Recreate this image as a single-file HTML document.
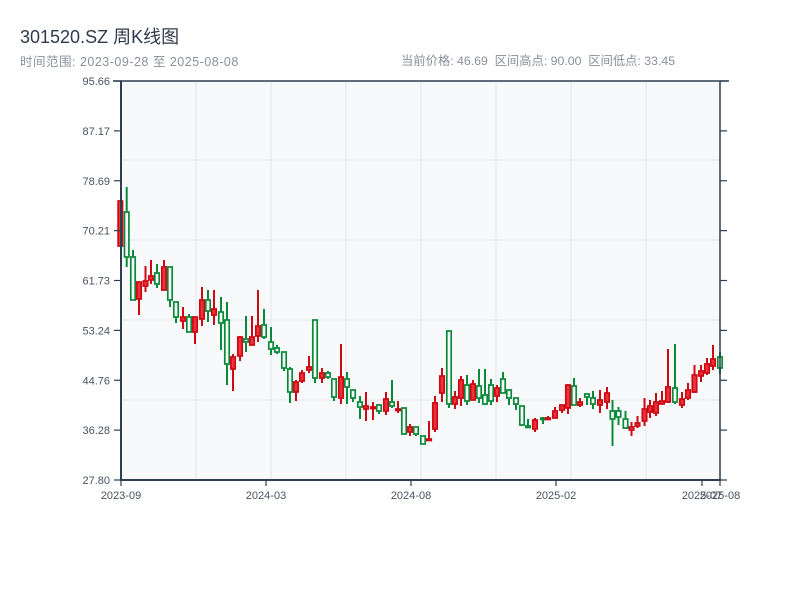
<!DOCTYPE html>
<html><head><meta charset="utf-8"><style>
body{margin:0;width:800px;height:600px;background:#fff;font-family:"Liberation Sans","Noto Sans CJK SC",sans-serif;position:relative;overflow:hidden}
.t{position:absolute;left:20px;top:23px;font-size:18px;color:#2f3a4a}
.s{position:absolute;top:51px;font-size:12.5px;color:#8a9099}
</style></head><body>
<div class="t">301520.SZ 周K线图</div>
<div class="s" style="left:20px;letter-spacing:0.5px">时间范围: 2023-09-28 至 2025-08-08</div>
<div class="s" style="left:401px;font-size:12.3px">当前价格: 46.69&nbsp; 区间高点: 90.00&nbsp; 区间低点: 33.45</div>
<svg id="c" width="800" height="600" style="position:absolute;left:0;top:0" font-family="Liberation Sans, sans-serif"></svg>
<script>
var s='';
s+='<rect x="121" y="81" width="599" height="399" fill="#f7f9fb"/>';
[160,240,320,400].forEach(function(y){s+='<line x1="121" x2="720" y1="'+y+'" y2="'+y+'" stroke="#e3e5e9" stroke-width="1"/>';});
for(var k=1;k<8;k++){var x=121+k*75;s+='<line x1="'+x+'" x2="'+x+'" y1="81" y2="480" stroke="#e3e5e9" stroke-width="1"/>';}
var d=[
[120.3,'r',201,246,201,246],[126.7,'g',212,257,187,267],[133,'g',257,300,250,300],[139,'r',282,299,282,315],[145.5,'r',281,286,266,292],[151,'r',276,280,260,284],[157,'g',273,284,264,288],[164,'r',267,290,260,290],[170,'g',267,300,267,307],[176,'g',302,317,302,323],
[183,'r',317,321,307,329],[189,'g',317,332,314,332],[195,'r',317,332,317,344],[202,'r',300,319,287,326],[208,'g',300,311,290,322],[214,'r',309,315,290,325],[221,'g',312,323,297,350],[227,'g',320,364,302,385],[233,'r',357,369,354,391],[240,'r',337,356,336,361],[246,'g',339,342,316,352],[252,'r',337,345,316,345],[258,'r',326,336,290,342],[264,'g',325,337,309,339],[271,'g',342,349,327,355],[277,'g',348,352,345,354],[284,'g',352,368,352,371],[290,'g',369,392,367,403],[296,'r',382,392,380,401],[302,'r',373,381,370,383],[309,'r',367,370,356,373],[315,'g',320,378,320,383],[322,'r',373,378,368,383],[328,'g',373,377,371,379],[334,'g',379,397,379,401],[341,'r',377,398,344,404],[347,'g',379,387,372,404],[353,'g',390,398,390,402],[360,'g',402,407,396,419],[366,'r',406,409,392,421],[373,'r',407,408,402,420],[379,'g',405,411,404,414],
[386,'r',399,411,392,415],[392,'g',402,406,380,408],[398,'r',409,410,401,413],[404,'g',408,434,408,435],[410,'r',427,432,424,436],[416,'g',427,434,427,436],[423,'g',436,444,436,444],[429,'r',439,440,421,441],[435,'r',403,429,396,432],[442,'r',376,393,368,402],[449,'g',331,404,331,408],[455,'r',397,404,391,409],[461,'r',380,398,376,406],[467,'g',385,401,375,405],[473,'r',384,400,380,400],[479,'g',386,398,369,403],[485,'g',395,404,369,405],[491,'g',385,401,379,405],[497,'r',388,396,385,402],[503,'g',379,393,372,393],[509,'g',390,398,390,405],[516,'g',398,404,398,410],[522,'g',406,425,406,426],[528,'g',426,427,419,428],[535,'r',420,429,418,432],[543,'g',418,419,417,424],[548,'r',418,419,416,420],[555,'r',411,418,407,418],[562,'r',405,410,405,413],[568,'r',385,408,384,414],[574,'g',386,405,378,405],
[580,'r',402,405,398,407],[587,'g',394,397,394,405],[593,'g',398,404,391,409],[600,'r',400,405,390,413],[607,'r',393,402,387,409],[612.5,'g',411,419,400,446],[618.5,'g',411,417,407,425],[625.5,'g',419,428,411,429],[631.5,'r',427,430,422,436],[637.5,'r',423,426,416,428],[644.5,'r',409,421,398,426],[650,'r',406,412,400,418],[656,'r',402,413,393,416],[662,'r',401,404,391,404],[668,'r',387,402,349,403],[675,'g',388,402,344,404],[682,'r',399,405,392,408],[688,'r',390,398,383,400],[694.5,'r',375,392,365,393],[701,'r',371,376,365,382],[707,'r',364,373,358,375],[713,'r',359,366,345,370],[720,'g',357,368,352,374]];
d.forEach(function(c){var x=c[0],col=c[1]=='r'?'#cc0a14':'#098a39',fill=c[1]=='r'?'#f0303a':'#f7f9fb';
s+='<line x1="'+x+'" x2="'+x+'" y1="'+c[4]+'" y2="'+c[5]+'" stroke="'+col+'" stroke-width="2"/>';
var h=Math.max(c[3]-c[2],1.5);s+='<rect x="'+(x-2.2)+'" y="'+c[2]+'" width="4.4" height="'+h+'" fill="'+fill+'" stroke="'+col+'" stroke-width="1.7"/>';});
s+='<line x1="113" x2="729" y1="81" y2="81" stroke="#2c3e50" stroke-width="1.5"/>';
s+='<line x1="121" x2="121" y1="81" y2="481" stroke="#2c3e50" stroke-width="2"/>';
s+='<line x1="720" x2="720" y1="81" y2="481" stroke="#2c3e50" stroke-width="1.5"/>';
s+='<line x1="121" x2="721" y1="480" y2="480" stroke="#2c3e50" stroke-width="2"/>';
var L=['95.66','87.17','78.69','70.21','61.73','53.24','44.76','36.28','27.80'];
for(var i=0;i<9;i++){var y=81+i*49.875;s+='<line x1="114" x2="121" y1="'+y+'" y2="'+y+'" stroke="#2c3e50" stroke-width="1.2"/><line x1="720" x2="727" y1="'+y+'" y2="'+y+'" stroke="#2c3e50" stroke-width="1.2"/>';
s+='<text x="110" y="'+(y+4)+'" font-size="11" fill="#4a5260" text-anchor="end">'+L[i]+'</text>';}
[[121,'2023-09'],[266,'2024-03'],[411,'2024-08'],[556,'2025-02'],[702,'2025-07'],[720,'2025-08']].forEach(function(a){s+='<line x1="'+a[0]+'" x2="'+a[0]+'" y1="480" y2="486" stroke="#2c3e50" stroke-width="1.2"/><text x="'+a[0]+'" y="499" font-size="11" fill="#4a5260" text-anchor="middle">'+a[1]+'</text>';});
document.getElementById('c').innerHTML=s;
</script>
</body></html>
